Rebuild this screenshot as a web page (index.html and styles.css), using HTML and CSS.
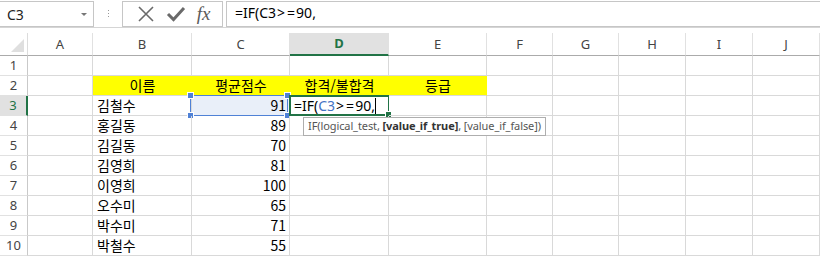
FILE: index.html
```html
<!DOCTYPE html>
<html lang="ko">
<head>
    <meta charset="UTF-8">
    <meta name="viewport" content="width=device-width, initial-scale=1.0">
    <title>IF 함수</title>
    <link rel="stylesheet" href="styles.css">
</head>
<body>
    <div class="formula-bar">
        <div class="name-box">
            <span>C3</span>
            <span class="drop"></span>
        </div>
        <div class="grip"><i></i><i></i><i></i></div>
        <div class="fx-buttons">
            <svg class="icon" width="18" height="18" viewBox="0 0 18 18">
                <path d="M2 2 L16 16 M16 2 L2 16" stroke="#6a6a6a" stroke-width="1.6" fill="none"/>
            </svg>
            <svg class="icon" width="20" height="18" viewBox="0 0 20 18">
                <path d="M2 9 L7.5 14.5 L18 3" stroke="#6a6a6a" stroke-width="3" fill="none"/>
            </svg>
            <span class="fx">fx</span>
        </div>
        <div class="formula-input">=IF(C3<span class="op">&gt;</span><span class="op">=</span>90,</div>
    </div>

    <div class="sheet">
        <div class="corner"><span class="tri"></span></div>
        <div class="ch">A</div>
        <div class="ch">B</div>
        <div class="ch">C</div>
        <div class="ch active">D</div>
        <div class="ch">E</div>
        <div class="ch">F</div>
        <div class="ch">G</div>
        <div class="ch">H</div>
        <div class="ch">I</div>
        <div class="ch">J</div>

        <div class="rh">1</div>
        <div class="c"></div><div class="c"></div><div class="c"></div><div class="c"></div><div class="c"></div>
        <div class="c"></div><div class="c"></div><div class="c"></div><div class="c"></div><div class="c"></div>

        <div class="rh">2</div>
        <div class="c"></div>
        <div class="c fill center">이름</div>
        <div class="c fill center">평균점수</div>
        <div class="c fill center">합격/불합격</div>
        <div class="c fill center">등급</div>
        <div class="c"></div><div class="c"></div><div class="c"></div><div class="c"></div><div class="c"></div>

        <div class="rh active">3</div>
        <div class="c"></div>
        <div class="c">김철수</div>
        <div class="c num ref">91<span class="ref-box"><i class="h tl"></i><i class="h tr"></i><i class="h bl"></i><i class="h br"></i></span></div>
        <div class="c editing">=IF(<span class="blue">C3</span><span class="op">&gt;</span><span class="op">=</span>90,<span class="cursor"></span><span class="edit-box"><i class="knob"></i></span></div>
        <div class="c"></div><div class="c"></div><div class="c"></div><div class="c"></div><div class="c"></div><div class="c"></div>

        <div class="rh">4</div>
        <div class="c"></div><div class="c">홍길동</div><div class="c num">89</div>
        <div class="c"></div><div class="c"></div><div class="c"></div><div class="c"></div><div class="c"></div><div class="c"></div><div class="c"></div>

        <div class="rh">5</div>
        <div class="c"></div><div class="c">김길동</div><div class="c num">70</div>
        <div class="c"></div><div class="c"></div><div class="c"></div><div class="c"></div><div class="c"></div><div class="c"></div><div class="c"></div>

        <div class="rh">6</div>
        <div class="c"></div><div class="c">김영희</div><div class="c num">81</div>
        <div class="c"></div><div class="c"></div><div class="c"></div><div class="c"></div><div class="c"></div><div class="c"></div><div class="c"></div>

        <div class="rh">7</div>
        <div class="c"></div><div class="c">이영희</div><div class="c num">100</div>
        <div class="c"></div><div class="c"></div><div class="c"></div><div class="c"></div><div class="c"></div><div class="c"></div><div class="c"></div>

        <div class="rh">8</div>
        <div class="c"></div><div class="c">오수미</div><div class="c num">65</div>
        <div class="c"></div><div class="c"></div><div class="c"></div><div class="c"></div><div class="c"></div><div class="c"></div><div class="c"></div>

        <div class="rh">9</div>
        <div class="c"></div><div class="c">박수미</div><div class="c num">71</div>
        <div class="c"></div><div class="c"></div><div class="c"></div><div class="c"></div><div class="c"></div><div class="c"></div><div class="c"></div>

        <div class="rh">10</div>
        <div class="c"></div><div class="c">박철수</div><div class="c num">55</div>
        <div class="c"></div><div class="c"></div><div class="c"></div><div class="c"></div><div class="c"></div><div class="c"></div><div class="c"></div>

        <div class="tooltip">IF(logical_test, <b>[value_if_true]</b>, [value_if_false])</div>
    </div>
</body>
</html>
```

FILE: styles.css
```css
html, body {
    margin: 0;
    padding: 0;
    background: #fff;
    overflow: hidden;
}
body {
    font-family: "Noto Sans", "Noto Sans CJK KR", sans-serif;
    color: #000;
}

/* formula bar */
.formula-bar {
    display: flex;
    height: 27px;
    border-bottom: 1px solid #d5d5d5;
    box-sizing: content-box;
}
.name-box {
    width: 94px;
    height: 26px;
    box-sizing: border-box;
    margin-top: 1px;
    border: 1px solid #c6c6c6;
    border-left: none;
    display: flex;
    align-items: center;
    justify-content: space-between;
    padding: 0 6px 0 7px;
    font-size: 14px;
    color: #222;
}
.drop {
    width: 0;
    height: 0;
    border-left: 3px solid transparent;
    border-right: 3px solid transparent;
    border-top: 3px solid #777;
}
.grip {
    width: 28px;
    display: flex;
    flex-direction: column;
    align-items: center;
    justify-content: center;
    gap: 2px;
}
.grip i {
    width: 1px;
    height: 1px;
    background: #999;
}
.fx-buttons {
    width: 101px;
    height: 26px;
    box-sizing: border-box;
    margin-top: 1px;
    border: 1px solid #c6c6c6;
    display: flex;
    align-items: center;
    justify-content: space-around;
    padding: 0 6px 0 8px;
}
.fx {
    font-family: "Liberation Serif", "DejaVu Serif", serif;
    font-style: italic;
    font-size: 19px;
    color: #5a5a5a;
    letter-spacing: 0;
}
.formula-input {
    flex: 1;
    height: 26px;
    box-sizing: border-box;
    margin-top: 1px;
    margin-left: 3px;
    border: 1px solid #c6c6c6;
    border-right: none;
    font-size: 14px;
    line-height: 22px;
    padding-left: 8px;
}
.op {
    padding: 0 1px;
}

/* sheet grid */
.sheet {
    position: relative;
    margin-top: 5px;
    height: 226px;
    overflow: hidden;
    display: grid;
    grid-template-columns: 28px 65px 99px 98px 99px 98px 66px 66px 67px 67px 67px;
    grid-template-rows: 23px repeat(10, 20px);
    font-family: "Noto Sans CJK KR", "Noto Sans", sans-serif;
}
.corner, .ch, .rh, .c {
    box-sizing: border-box;
}
.corner {
    position: relative;
    border-bottom: 1px solid #ababab;
    border-right: 1px solid #dcdcdc;
}
.tri {
    position: absolute;
    right: 3px;
    bottom: 3px;
    width: 0;
    height: 0;
    border-left: 13px solid transparent;
    border-bottom: 13px solid #dfdfdf;
}
.ch {
    border-bottom: 1px solid #ababab;
    border-right: 1px solid #e1e1e1;
    text-align: center;
    font-family: "Noto Sans", sans-serif;
    font-size: 13px;
    line-height: 22px;
    color: #444;
}
.ch.active {
    background: #e1e1e1;
    border-bottom: 2px solid #217346;
    color: #217346;
    font-weight: bold;
    line-height: 21px;
}
.rh {
    border-right: 1px solid #c9c9c9;
    border-bottom: 1px solid #e1e1e1;
    text-align: center;
    font-family: "Noto Sans", sans-serif;
    font-size: 13px;
    line-height: 19px;
    color: #444;
}
.rh.active {
    background: #e1e1e1;
    border-right: 2px solid #217346;
    color: #217346;
}
.c {
    position: relative;
    border-right: 1px solid #d9d9d9;
    border-bottom: 1px solid #d9d9d9;
    font-size: 14px;
    line-height: 19px;
    padding: 0 3px 0 4px;
    white-space: nowrap;
}
.c.fill {
    background: #ffff00;
    border-right-color: #ffff00;
}
.c.center {
    text-align: center;
}
.c.num {
    text-align: right;
}

/* referenced cell C3 */
.c.ref {
    background: #e9eff9;
}
.ref-box {
    position: absolute;
    left: -2px;
    top: -1px;
    right: 1px;
    bottom: -1px;
    border: 1px solid #4f81d6;
}
.h {
    position: absolute;
    width: 5px;
    height: 5px;
    background: #4f81d6;
    border: 1px solid #fff;
}
.h.tl { left: -4px; top: -4px; }
.h.tr { right: -4px; top: -4px; }
.h.bl { left: -4px; bottom: -4px; }
.h.br { right: -4px; bottom: -4px; }

/* cell in edit mode D3 */
.c.editing {
    padding-left: 4px;
    font-family: "Noto Sans", "Noto Sans CJK KR", sans-serif;
}
.blue {
    color: #4472c4;
}
.cursor {
    display: inline-block;
    width: 1px;
    height: 16px;
    background: #000;
    vertical-align: -3px;
}
.edit-box {
    position: absolute;
    left: -1px;
    top: -1px;
    right: -1px;
    bottom: -1px;
    border: 2px solid #217346;
    border-right-width: 1px;
}
.knob {
    position: absolute;
    right: -4px;
    bottom: -4px;
    width: 5px;
    height: 5px;
    background: #217346;
    border: 1px solid #fff;
}

.tooltip {
    position: absolute;
    left: 303px;
    top: 84px;
    height: 17px;
    padding: 0 4px;
    background: #fff;
    border: 1px solid #aeaeae;
    font-family: "Noto Sans", sans-serif;
    font-size: 11px;
    line-height: 16px;
    letter-spacing: -0.1px;
    color: #555;
    white-space: nowrap;
}
.tooltip b {
    color: #333;
}
```
